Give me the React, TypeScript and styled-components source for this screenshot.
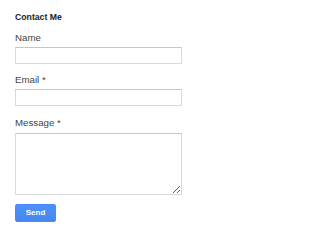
import React from 'react';
import styled, { createGlobalStyle } from 'styled-components';

const GlobalStyle = createGlobalStyle`
  html, body {
    margin: 0;
    padding: 0;
    background: #ffffff;
  }
  body {
    font-family: "Liberation Sans", Arial, sans-serif;
  }
`;

const Widget = styled.div`
  width: 167px;
  padding: 12px 0 0 15px;
  display: flex;
  flex-direction: column;
`;

const Title = styled.h2`
  margin: 0 0 9px;
  font-size: 8.7px;
  line-height: 11px;
  font-weight: 700;
  color: #222222;
`;

const Form = styled.form`
  display: flex;
  flex-direction: column;
  margin: 0;
`;

const Label = styled.label<{ $gap?: number }>`
  display: block;
  margin: ${(p) => p.$gap ?? 0}px 0 3px;
  font-size: 9.7px;
  line-height: 12px;
  color: #444444;
`;

const Field = styled.input`
  box-sizing: border-box;
  display: block;
  width: 167px;
  height: 17px;
  margin: 0;
  padding: 0 4px;
  border: 1px solid #d9d9d9;
  border-top-color: #c6c6c6;
  border-radius: 0;
  background: #ffffff;
  outline: none;
`;

const MessageBox = styled.textarea`
  box-sizing: border-box;
  display: block;
  width: 167px;
  height: 62px;
  margin: 1px 0 0;
  padding: 2px 4px;
  border: 1px solid #d9d9d9;
  border-top-color: #c6c6c6;
  border-radius: 0;
  background: #ffffff;
  outline: none;
  font-family: inherit;
`;

const SendButton = styled.button`
  box-sizing: border-box;
  align-self: flex-start;
  width: 41px;
  height: 18px;
  margin-top: 9px;
  padding: 0;
  border: 1px solid #4a8af4;
  border-radius: 2px;
  background: linear-gradient(#4d90fe, #4787ed);
  color: #ffffff;
  font-family: "Liberation Sans", Arial, sans-serif;
  font-size: 8px;
  font-weight: 700;
  line-height: 16px;
  cursor: pointer;
`;

export default function App() {
  return (
    <>
      <GlobalStyle />
      <Widget>
        <Title>Contact Me</Title>
        <Form onSubmit={(e) => e.preventDefault()}>
          <Label htmlFor="cf-name">Name</Label>
          <Field id="cf-name" type="text" />
          <Label htmlFor="cf-email" $gap={10}>
            Email *
          </Label>
          <Field id="cf-email" type="text" />
          <Label htmlFor="cf-message" $gap={11}>
            Message *
          </Label>
          <MessageBox id="cf-message" />
          <SendButton type="submit">Send</SendButton>
        </Form>
      </Widget>
    </>
  );
}
